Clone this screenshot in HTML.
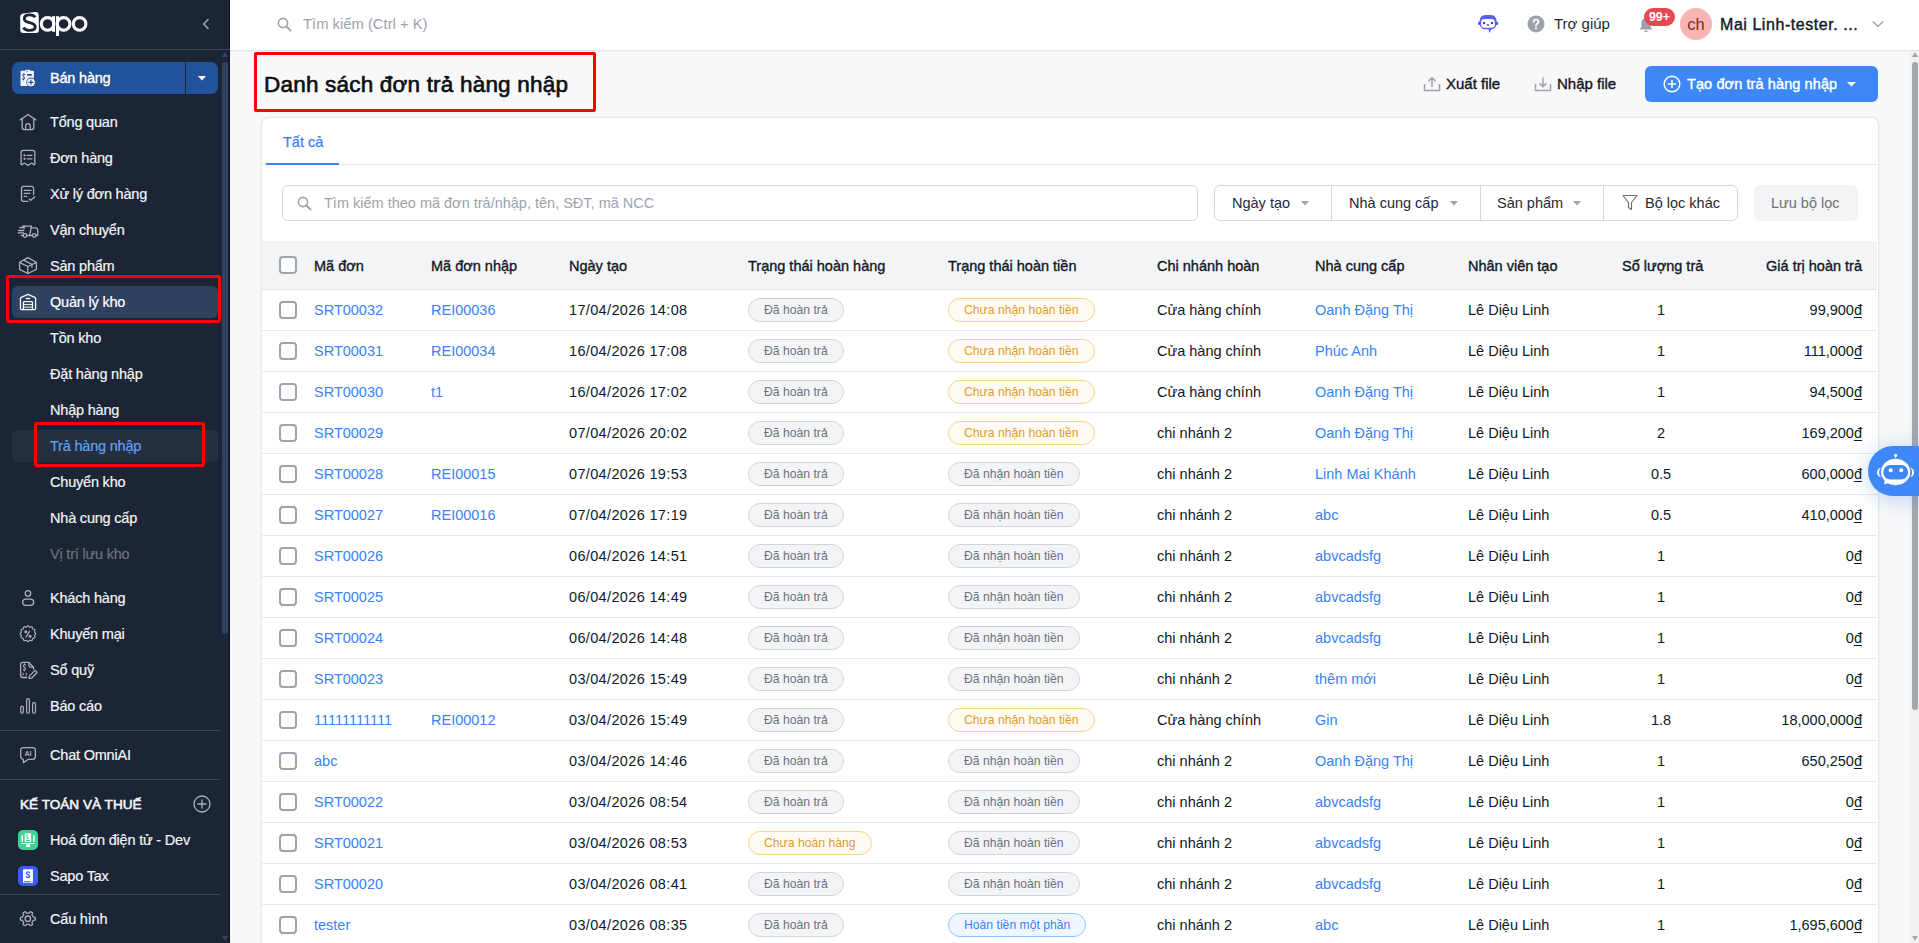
<!DOCTYPE html>
<html lang="vi">
<head>
<meta charset="utf-8">
<title>Danh sách đơn trả hàng nhập</title>
<style>
*{box-sizing:border-box;margin:0;padding:0}
html,body{width:1919px;height:943px;overflow:hidden}
body{font-family:"Liberation Sans",sans-serif;background:#f8f8f8;color:#111827;position:relative}
.abs{position:absolute}
/* sidebar */
#sb{position:absolute;left:0;top:0;width:230px;height:943px;background:#1c2535;border-right:1px solid #0e1520}
#sb .div{position:absolute;left:0;height:1px;background:#3c4657}
.mi{position:absolute;left:50px;font-size:14.5px;letter-spacing:-0.2px;color:#f1f3f6;-webkit-text-stroke:0.2px currentColor;white-space:nowrap;line-height:18px}
.ic{position:absolute;left:20px;width:17px;height:17px}
.ic svg{width:17px;height:17px;display:block}
/* topbar */
#tb{position:absolute;left:230px;top:0;right:0;height:51px;background:#fff;border-bottom:1px solid #e3e5e8;box-shadow:0 1px 2px rgba(0,0,0,.04)}
.t{position:absolute;white-space:nowrap}
/* card */
#card{position:absolute;left:261px;top:117px;width:1618px;height:900px;background:#fff;border:1px solid #e6e7ea;border-radius:8px;box-shadow:0 0 2px rgba(0,0,0,.08)}
.hd{position:absolute;top:241px;left:262px;width:1615px;height:49px;background:#f3f4f6;border-bottom:1px solid #e5e7eb}
.row{position:absolute;left:262px;width:1615px;height:41px;border-bottom:1px solid #e8e9ec;background:#fff}
.cb{position:absolute;left:279px;width:18px;height:18px;border:2px solid #9ca3af;border-radius:4px;background:#fff}
.th{position:absolute;top:258px;font-size:14.5px;-webkit-text-stroke:0.35px #111827;color:#111827;white-space:nowrap;line-height:16px}
.td{position:absolute;font-size:14.5px;color:#111827;white-space:nowrap;line-height:16px}
.lk{color:#3b82f6}
.dt{letter-spacing:.35px}
.pill{position:absolute;height:24px;border-radius:12px;border:1px solid #d1d5db;background:#f3f4f6;color:#6b7280;font-size:12.2px;line-height:22px;padding:0 15px;white-space:nowrap}
.pill.o{border-color:#fbd38d;background:#fffbf2;color:#e09b2d}
.pill.b{border-color:#93c5fd;background:#eff6ff;color:#3b82f6}
.md{-webkit-text-stroke:0.35px currentColor}
.dd{text-decoration:underline;text-decoration-thickness:1px;text-underline-offset:1.5px}
.red{position:absolute;border:3px solid #ff0000;border-radius:2px}
</style>
</head>
<body>

<!-- ================= SIDEBAR ================= -->
<div id="sb">
  <!-- logo -->
  <svg class="abs" style="left:0;top:0" width="100" height="44" viewBox="0 0 100 44">
    <path d="M23.5 13.6 L35.2 12.1 Q38.6 11.8 38.7 15 L38.9 30 Q38.9 32.9 36 32.9 L23.3 33 Q20.3 33 20.3 30 L20.2 17 Q20.2 14 23.5 13.6Z" fill="#fff"/>
    <path d="M35.2 17.2 C34.2 15.6 32 14.9 29.6 14.9 C26.3 14.9 24.3 16.6 24.3 18.9 C24.3 23.6 35.2 21.6 35.2 26.7 C35.2 29.1 32.8 30.4 29.7 30.4 C26.9 30.4 24.7 29.4 23.3 27.6" fill="none" stroke="#1c2535" stroke-width="2.9"/>
    <circle cx="47.6" cy="23.9" r="6.3" fill="none" stroke="#fff" stroke-width="3.1"/>
    <path d="M53.6 16.2 V31.8" stroke="#fff" stroke-width="3"/>
    <circle cx="63.6" cy="23.9" r="6.3" fill="none" stroke="#fff" stroke-width="3.1"/>
    <path d="M57.5 16.2 V36" stroke="#fff" stroke-width="3"/>
    <circle cx="79.6" cy="23.9" r="6.3" fill="none" stroke="#fff" stroke-width="3.1"/>
  </svg>
  <svg class="abs" style="left:202px;top:18px" width="8" height="12" viewBox="0 0 8 12"><path d="M6.5 1 L1.8 6 L6.5 11" fill="none" stroke="#9aa3b2" stroke-width="1.6"/></svg>
  <div class="div" style="top:49px;width:230px"></div>

  <!-- scrollbar -->
  <svg class="abs" style="left:222px;top:52px" width="6" height="5"><path d="M3 0 L6 5 L0 5Z" fill="#34456a"/></svg>
  <div class="abs" style="left:222px;top:62px;width:6px;height:572px;border-radius:3px;background:#2f4163"></div>

  <!-- Ban hang button -->
  <div class="abs" style="left:12px;top:62px;width:206px;height:32px;border-radius:7px;background:#21539a"></div>
  <div class="abs" style="left:185px;top:62px;width:1px;height:32px;background:#1c2535"></div>
  <svg class="abs" style="left:198px;top:76px" width="8" height="5"><path d="M0 0 L8 0 L4 4.5Z" fill="#fff"/></svg>
  <svg class="abs" style="left:16px;top:66px" width="24" height="24" viewBox="0 0 24 24"><path d="M5.6 4.8 H9 Q9.4 3.8 10.4 3.8 H13 Q14 3.8 14.4 4.8 H17 Q17.9 4.8 17.9 5.8 V19.1 Q17.9 20.1 16.9 20.1 H5.5 Q4.5 20.1 4.5 19.1 V5.9 Q4.5 4.8 5.6 4.8Z" fill="#f3f4f6"/><ellipse cx="11.1" cy="5.4" rx="1" ry=".4" fill="#21539a"/><rect x="10.9" y="8.1" width="5" height="1.6" rx=".6" fill="#21539a"/><path d="M8.8 8.6 Q8.1 8.1 7.4 8.5 Q6.6 9 7.1 10 L8.2 11.3 Q8.8 12.3 8 12.9 Q7.2 13.4 6.4 12.8 M7.8 7.6 V8.3 M7.6 13.1 V13.9" fill="none" stroke="#21539a" stroke-width="1.1" stroke-linecap="round"/><circle cx="15" cy="16.3" r="4.7" fill="#21539a"/><circle cx="15" cy="16.3" r="3.9" fill="#f3f4f6"/><path d="M12.9 16.3 H17.1 M15 14.2 V18.4" stroke="#21539a" stroke-width="1.2" stroke-linecap="round"/></svg>
  <div class="mi" style="top:69px;color:#fff;-webkit-text-stroke:0.35px #fff">Bán hàng</div>

  <!-- menu -->
  <svg class="abs" style="left:16px;top:110px" width="24" height="24" viewBox="0 0 24 24" fill="none" stroke="#a9b0bb" stroke-width="1.3" stroke-linecap="round" stroke-linejoin="round"><path d="M4.2 9.9 L12 4.45 L19.85 9.9"/><path d="M6.2 9 V17.5 Q6.2 19.6 8.3 19.6 H15.7 Q17.8 19.6 17.8 17.5 V9"/><path d="M9.6 19.6 V15.9 Q9.6 13.7 11.9 13.7 Q14.2 13.7 14.2 15.9 V19.6"/></svg>
  <div class="mi" style="top:113px">Tổng quan</div>

  <svg class="abs" style="left:16px;top:146px" width="24" height="24" viewBox="0 0 24 24" fill="none" stroke="#a9b0bb" stroke-width="1.3" stroke-linecap="round" stroke-linejoin="round"><path d="M5.1 18.4 V6.5 Q5.1 4.3 7.3 4.3 H16.6 Q18.8 4.3 18.8 6.5 V18.4 Q17.9 19.2 16.7 17.6 Q15.9 16.6 14.9 17.5 L12 19.4 L9.1 17.5 Q8.1 16.6 7.3 17.6 Q6.1 19.2 5.1 18.4Z"/><path d="M11.2 9.4 H15.9 M11.2 12.85 H15.9"/><circle cx="8.5" cy="9.4" r=".5" fill="#a9b0bb"/><circle cx="8.5" cy="12.85" r=".5" fill="#a9b0bb"/></svg>
  <div class="mi" style="top:149px">Đơn hàng</div>

  <svg class="abs" style="left:16px;top:182px" width="24" height="24" viewBox="0 0 24 24" fill="none" stroke="#a9b0bb" stroke-width="1.3" stroke-linecap="round" stroke-linejoin="round"><path d="M12 19.3 H7.5 Q5.5 19.3 5.5 17.3 V6.5 Q5.5 4.45 7.5 4.45 H15.6 Q17.6 4.45 17.6 6.5 V12.7"/><path d="M8.1 8.3 H15 M8.1 11.3 H13.8 M8.1 14.4 H10.7"/><path d="M13.2 16.9 L14.75 18.3 L18.7 15"/></svg>
  <div class="mi" style="top:185px">Xử lý đơn hàng</div>

  <svg class="abs" style="left:14px;top:216px" width="28" height="28" viewBox="0 0 28 28" fill="none" stroke="#a9b0bb" stroke-width="1.3" stroke-linecap="round" stroke-linejoin="round"><path d="M8.3 10.2 H17.5 L15.6 19.5"/><path d="M10.1 10.2 V12.5"/><path d="M17.3 11.9 H21.3 Q23.75 11.9 23.75 14.6 V19.5 H22.1"/><path d="M7.4 19.5 H9.1 M12.9 19.5 H18.3"/><circle cx="11" cy="19.45" r="1.8"/><circle cx="20.2" cy="19.45" r="1.8"/><path d="M5.8 11.7 H9.5 M4.6 14.5 H9.8 M4.1 16.9 H9.6"/></svg>
  <div class="mi" style="top:221px">Vận chuyển</div>

  <svg class="abs" style="left:16px;top:254px" width="24" height="24" viewBox="0 0 24 24" fill="none" stroke="#a9b0bb" stroke-width="1.3" stroke-linecap="round" stroke-linejoin="round"><path d="M11.8 3.6 L20.4 8.3 V15.4 L11.8 19.5 L3.6 15.4 V8.3 Z"/><path d="M3.9 8.6 L11.8 12.5 L20.1 8.6 M11.8 12.5 V19.3"/><path d="M7.6 6.2 L15.9 10.4 V13.3"/></svg>
  <div class="mi" style="top:257px">Sản phẩm</div>

  <!-- Quan ly kho active -->
  <div class="abs" style="left:12px;top:286px;width:206px;height:32px;border-radius:6px;background:#2f4161"></div>
  <svg class="abs" style="left:16px;top:290px" width="24" height="24" viewBox="0 0 24 24" fill="none" stroke="#f4f6f9" stroke-width="1.3" stroke-linecap="round" stroke-linejoin="round"><path d="M4.45 8.5 Q4.45 7.7 5.2 7.3 L11.96 4.3 L18.8 7.3 Q19.6 7.7 19.6 8.5 V18.6 Q19.6 19.6 18.6 19.6 H5.45 Q4.45 19.6 4.45 18.6 Z"/><path d="M10.3 8.5 H13.6"/><path d="M7.4 19.6 V12.7 Q7.4 11.7 8.4 11.7 H15.5 Q16.5 11.7 16.5 12.7 V19.6"/><path d="M7.4 14.6 H16.5 M7.4 17.2 H16.5" stroke-width="1"/></svg>
  <div class="mi" style="top:293px;color:#fff">Quản lý kho</div>

  <div class="mi" style="top:329px">Tồn kho</div>
  <div class="mi" style="top:365px">Đặt hàng nhập</div>
  <div class="mi" style="top:401px">Nhập hàng</div>
  <div class="abs" style="left:12px;top:430px;width:206px;height:32px;border-radius:6px;background:#262f40"></div>
  <div class="mi" style="top:437px;color:#5ea0f7">Trả hàng nhập</div>
  <div class="mi" style="top:473px">Chuyển kho</div>
  <div class="mi" style="top:509px">Nhà cung cấp</div>
  <div class="mi" style="top:545px;color:#6b7280">Vị trí lưu kho</div>

  <svg class="abs" style="left:16px;top:586px" width="24" height="24" viewBox="0 0 24 24" fill="none" stroke="#a9b0bb" stroke-width="1.3" stroke-linecap="round" stroke-linejoin="round"><circle cx="11.96" cy="7.4" r="2.75"/><rect x="6.65" y="13.15" width="11" height="6.3" rx="3.1"/></svg>
  <div class="mi" style="top:589px">Khách hàng</div>

  <svg class="abs" style="left:16px;top:622px" width="24" height="24" viewBox="0 0 24 24" fill="none" stroke="#a9b0bb" stroke-width="1.3" stroke-linecap="round" stroke-linejoin="round"><path d="M11.96 3.80 L12.47 3.98 L12.92 4.41 L13.32 4.87 L13.72 5.13 L14.20 5.11 L14.77 4.91 L15.38 4.76 L15.91 4.86 L16.26 5.27 L16.43 5.87 L16.55 6.47 L16.77 6.89 L17.19 7.11 L17.79 7.23 L18.39 7.40 L18.80 7.75 L18.90 8.28 L18.75 8.89 L18.55 9.46 L18.53 9.94 L18.79 10.34 L19.25 10.74 L19.68 11.19 L19.86 11.70 L19.68 12.21 L19.25 12.66 L18.79 13.06 L18.53 13.46 L18.55 13.94 L18.75 14.51 L18.90 15.12 L18.80 15.65 L18.39 16.00 L17.79 16.17 L17.19 16.29 L16.77 16.51 L16.55 16.93 L16.43 17.53 L16.26 18.13 L15.91 18.54 L15.38 18.64 L14.77 18.49 L14.20 18.29 L13.72 18.27 L13.32 18.53 L12.92 18.99 L12.47 19.42 L11.96 19.60 L11.45 19.42 L11.00 18.99 L10.60 18.53 L10.20 18.27 L9.72 18.29 L9.15 18.49 L8.54 18.64 L8.01 18.54 L7.66 18.13 L7.49 17.53 L7.37 16.93 L7.15 16.51 L6.73 16.29 L6.13 16.17 L5.53 16.00 L5.12 15.65 L5.02 15.12 L5.17 14.51 L5.37 13.94 L5.39 13.46 L5.13 13.06 L4.67 12.66 L4.24 12.21 L4.06 11.70 L4.24 11.19 L4.67 10.74 L5.13 10.34 L5.39 9.94 L5.37 9.46 L5.17 8.89 L5.02 8.28 L5.12 7.75 L5.53 7.40 L6.13 7.23 L6.73 7.11 L7.15 6.89 L7.37 6.47 L7.49 5.87 L7.66 5.27 L8.01 4.86 L8.54 4.76 L9.15 4.91 L9.72 5.11 L10.20 5.13 L10.60 4.87 L11.00 4.41 L11.45 3.98Z" stroke-width="1.2"/><path d="M13.5 9.4 L10.1 15"/><circle cx="9.8" cy="9.7" r=".9" fill="#a9b0bb"/><circle cx="14.1" cy="14.25" r=".9" fill="#a9b0bb"/></svg>
  <div class="mi" style="top:625px">Khuyến mại</div>

  <svg class="abs" style="left:16px;top:658px" width="24" height="24" viewBox="0 0 24 24" fill="none" stroke="#a9b0bb" stroke-width="1.3" stroke-linecap="round" stroke-linejoin="round"><path d="M10.7 19.5 H6.6 Q4.6 19.5 4.6 17.5 V6.45 Q4.6 4.45 6.6 4.45 H12.7 L17.55 9.3 V11.2"/><path d="M12.9 5 V7.6 Q12.9 9.1 14.4 9.1 H17"/><path d="M9.6 7 Q8.7 6.4 7.9 6.9 Q7 7.5 7.6 8.5 L9.2 10 Q9.9 11 9 11.6 Q8.1 12.1 7.2 11.4 M8.4 5.9 V6.6 M8.4 11.9 V12.7" stroke-width="1.1"/><path d="M7.1 15.2 V17.1 M10.4 15.2 V17.1" stroke-width="1.4" opacity=".75"/><path d="M13 20.3 L13.3 18.1 L18.5 12.9 Q19.2 12.2 19.9 12.9 L20.6 13.6 Q21.3 14.3 20.6 15 L15.4 20.2 Z"/></svg>
  <div class="mi" style="top:661px">Sổ quỹ</div>

  <svg class="abs" style="left:16px;top:694px" width="24" height="24" viewBox="0 0 24 24" fill="none" stroke="#a9b0bb" stroke-width="1.2" stroke-linecap="round" stroke-linejoin="round"><rect x="4.8" y="12.05" width="2.5" height="7.2" rx="1.2"/><rect x="10.65" y="4.7" width="2.75" height="14.55" rx="1.2"/><rect x="16.6" y="8.7" width="2.9" height="10.55" rx="1.2"/></svg>
  <div class="mi" style="top:697px">Báo cáo</div>

  <div class="div" style="top:730px;width:220px"></div>

  <svg class="abs" style="left:16px;top:743px" width="24" height="24" viewBox="0 0 24 24" fill="none" stroke="#a9b0bb" stroke-width="1.3" stroke-linecap="round" stroke-linejoin="round"><path d="M7.3 16.3 Q4.7 16 4.7 13.2 V7.5 Q4.7 4.7 7.5 4.7 H16.5 Q19.4 4.7 19.4 7.5 V13.2 Q19.4 16.3 16.5 16.3 H12.4 L7.4 19.6 Z"/><text x="12" y="13.1" text-anchor="middle" font-family="Liberation Sans" font-weight="bold" font-size="7.2" fill="#a9b0bb" stroke="none">AI</text></svg>
  <div class="mi" style="top:746px">Chat OmniAI</div>

  <div class="div" style="top:779px;width:220px"></div>

  <div class="mi" style="left:20px;top:796px;font-size:13.6px;letter-spacing:0;color:#f1f3f6;-webkit-text-stroke:0.6px #f1f3f6">KẾ TOÁN VÀ THUẾ</div>
  <svg class="abs" style="left:193px;top:795px" width="18" height="18" viewBox="0 0 18 18"><circle cx="9" cy="9" r="8" fill="none" stroke="#aab1bd" stroke-width="1.3"/><path d="M9 4.5v9M4.5 9h9" stroke="#aab1bd" stroke-width="1.3"/></svg>

  <div class="abs" style="left:18px;top:830px;width:20px;height:20px;border-radius:5px;background:#41d18f"></div>
  <svg class="abs" style="left:16px;top:828px" width="24" height="24" viewBox="0 0 24 24"><rect x="5.5" y="7.3" width="1.5" height="6.6" fill="#fff"/><rect x="17.1" y="7.3" width="1.5" height="6.6" fill="#fff"/><rect x="8.7" y="5.3" width="6.4" height="8.7" fill="#fff"/><path d="M12 7 Q11 6.5 10.5 7.2 Q10.1 7.9 10.9 8.6 L11.8 9.4 Q12.3 10.1 11.7 10.6 Q11.1 11 10.4 10.5" fill="none" stroke="#41d18f" stroke-width="1"/><rect x="10.2" y="12" width="3.6" height="1" fill="#41d18f"/><rect x="5.3" y="15" width="13.4" height="1.1" fill="#fff" opacity=".85"/><path d="M10.5 16.2 H13.6 L14.3 18.9 H9.8Z" fill="#fff"/></svg>
  <div class="mi" style="top:831px">Hoá đơn điện tử - Dev</div>

  <div class="abs" style="left:18px;top:866px;width:20px;height:20px;border-radius:5px;background:#3c5cf6"></div>
  <svg class="abs" style="left:16px;top:864px" width="24" height="24" viewBox="0 0 24 24"><path d="M8 5.2 H16.9 V17.6 H8 Q7 17.6 7 18.6 V6.2 Q7 5.2 8 5.2Z" fill="#fff"/><rect x="7" y="17.6" width="9.9" height="1.3" fill="#fff"/><path d="M8 17.8 H14.4" stroke="#3c5cf6" stroke-width=".9"/><path d="M13.6 8.6 Q13.1 7.9 12.1 7.9 Q10.6 7.9 10.6 9.2 Q10.6 10.2 12 10.6 Q13.6 11 13.6 12.2 Q13.6 13.5 12 13.5 Q10.9 13.5 10.4 12.7" fill="none" stroke="#3c5cf6" stroke-width="1.3" stroke-linecap="round"/></svg>
  <div class="mi" style="top:867px">Sapo Tax</div>

  <div class="div" style="top:894px;width:220px"></div>

  <svg class="abs" style="left:16px;top:907px" width="24" height="24" viewBox="0 0 24 24" fill="none" stroke="#a9b0bb" stroke-width="1.3" stroke-linecap="round" stroke-linejoin="round"><path d="M11.83 6.10 L11.98 6.10 L12.12 6.11 L12.27 6.12 L12.42 6.13 L12.56 6.15 L12.71 6.17 L12.85 6.19 L12.99 6.22 L13.14 6.25 L13.38 5.92 L13.66 5.51 L13.97 5.11 L14.30 4.72 L14.52 4.70 L14.70 4.77 L14.88 4.85 L15.06 4.93 L15.23 5.02 L15.41 5.11 L15.58 5.20 L15.75 5.31 L15.91 5.41 L16.08 5.52 L16.24 5.63 L16.40 5.75 L16.55 5.87 L16.64 6.07 L16.47 6.55 L16.27 7.02 L16.06 7.47 L15.89 7.85 L15.99 7.95 L16.09 8.06 L16.18 8.18 L16.27 8.29 L16.36 8.41 L16.45 8.53 L16.53 8.65 L16.60 8.77 L16.68 8.90 L16.75 9.03 L16.82 9.16 L16.88 9.29 L16.95 9.42 L17.00 9.56 L17.06 9.69 L17.11 9.83 L17.16 9.97 L17.20 10.11 L17.61 10.15 L18.11 10.19 L18.61 10.26 L19.11 10.35 L19.24 10.53 L19.27 10.72 L19.29 10.92 L19.31 11.11 L19.32 11.31 L19.33 11.50 L19.33 11.70 L19.33 11.90 L19.32 12.09 L19.31 12.29 L19.29 12.48 L19.27 12.68 L19.24 12.87 L19.11 13.05 L18.61 13.14 L18.11 13.21 L17.61 13.25 L17.20 13.29 L17.16 13.43 L17.11 13.57 L17.06 13.71 L17.00 13.84 L16.95 13.98 L16.88 14.11 L16.82 14.24 L16.75 14.37 L16.68 14.50 L16.60 14.63 L16.53 14.75 L16.45 14.87 L16.36 14.99 L16.27 15.11 L16.18 15.22 L16.09 15.34 L15.99 15.45 L15.89 15.55 L16.06 15.93 L16.27 16.38 L16.47 16.85 L16.64 17.33 L16.55 17.53 L16.40 17.65 L16.24 17.77 L16.08 17.88 L15.91 17.99 L15.75 18.09 L15.58 18.20 L15.41 18.29 L15.23 18.38 L15.06 18.47 L14.88 18.55 L14.70 18.63 L14.52 18.70 L14.30 18.68 L13.97 18.29 L13.66 17.89 L13.38 17.48 L13.14 17.15 L12.99 17.18 L12.85 17.21 L12.71 17.23 L12.56 17.25 L12.42 17.27 L12.27 17.28 L12.12 17.29 L11.98 17.30 L11.83 17.30 L11.68 17.30 L11.54 17.29 L11.39 17.28 L11.24 17.27 L11.10 17.25 L10.95 17.23 L10.81 17.21 L10.67 17.18 L10.52 17.15 L10.28 17.48 L10.00 17.89 L9.69 18.29 L9.36 18.68 L9.14 18.70 L8.96 18.63 L8.78 18.55 L8.60 18.47 L8.43 18.38 L8.25 18.29 L8.08 18.20 L7.91 18.09 L7.75 17.99 L7.58 17.88 L7.42 17.77 L7.26 17.65 L7.11 17.53 L7.02 17.33 L7.19 16.85 L7.39 16.38 L7.60 15.93 L7.77 15.55 L7.67 15.45 L7.57 15.34 L7.48 15.22 L7.39 15.11 L7.30 14.99 L7.21 14.87 L7.13 14.75 L7.06 14.63 L6.98 14.50 L6.91 14.37 L6.84 14.24 L6.78 14.11 L6.71 13.98 L6.66 13.84 L6.60 13.71 L6.55 13.57 L6.50 13.43 L6.46 13.29 L6.05 13.25 L5.55 13.21 L5.05 13.14 L4.55 13.05 L4.42 12.87 L4.39 12.68 L4.37 12.48 L4.35 12.29 L4.34 12.09 L4.33 11.90 L4.33 11.70 L4.33 11.50 L4.34 11.31 L4.35 11.11 L4.37 10.92 L4.39 10.72 L4.42 10.53 L4.55 10.35 L5.05 10.26 L5.55 10.19 L6.05 10.15 L6.46 10.11 L6.50 9.97 L6.55 9.83 L6.60 9.69 L6.66 9.56 L6.71 9.42 L6.78 9.29 L6.84 9.16 L6.91 9.03 L6.98 8.90 L7.06 8.77 L7.13 8.65 L7.21 8.53 L7.30 8.41 L7.39 8.29 L7.48 8.18 L7.57 8.06 L7.67 7.95 L7.77 7.85 L7.60 7.47 L7.39 7.02 L7.19 6.55 L7.02 6.07 L7.11 5.87 L7.26 5.75 L7.42 5.63 L7.58 5.52 L7.75 5.41 L7.91 5.31 L8.08 5.20 L8.25 5.11 L8.43 5.02 L8.60 4.93 L8.78 4.85 L8.96 4.77 L9.14 4.70 L9.36 4.72 L9.69 5.11 L10.00 5.51 L10.28 5.92 L10.52 6.25 L10.67 6.22 L10.81 6.19 L10.95 6.17 L11.10 6.15 L11.24 6.13 L11.39 6.12 L11.54 6.11 L11.68 6.10Z" stroke-width="1.25"/><circle cx="11.83" cy="11.7" r="2.7"/></svg>
  <div class="mi" style="top:910px">Cấu hình</div>

  <svg class="abs" style="left:222px;top:936px" width="6" height="5"><path d="M0 0 L6 0 L3 5Z" fill="#34456a"/></svg>

  <!-- red highlight boxes -->
  <div class="red" style="left:6px;top:275px;width:215px;height:48px"></div>
  <div class="red" style="left:34px;top:422px;width:171px;height:45px"></div>
</div>

<!-- ================= TOPBAR ================= -->
<div id="tb"></div>
<svg class="abs" style="left:277px;top:17px" width="15" height="15" viewBox="0 0 15 15"><circle cx="6" cy="6" r="4.6" fill="none" stroke="#9ca3af" stroke-width="1.6"/><path d="M9.5 9.5 L13.5 13.5" stroke="#9ca3af" stroke-width="1.8" stroke-linecap="round"/></svg>
<div class="t" style="left:303px;top:16.2px;font-size:14.8px;color:#9ca3af">Tìm kiếm (Ctrl + K)</div>

<svg class="abs" style="left:1472px;top:8px" width="32" height="32" viewBox="0 0 32 32"><rect x="7.8" y="7" width="16.6" height="14.3" rx="5.2" fill="#5b60f5"/><rect x="6" y="13.4" width="20.2" height="3.6" rx="1.3" fill="#5b60f5"/><path d="M16.3 20.5 L20 20.3 L17.3 25Z" fill="#5b60f5"/><rect x="9.1" y="10.9" width="13.7" height="8.9" rx="3.2" fill="#fff"/><circle cx="12" cy="15.1" r="1.1" fill="#1c1a66"/><circle cx="20" cy="15.1" r="1.1" fill="#1c1a66"/><path d="M14.4 16.4 H17.6 Q16 19 14.4 16.4Z" fill="#1c1a66"/></svg>
<svg class="abs" style="left:1527px;top:15px" width="18" height="18" viewBox="0 0 18 18"><circle cx="9" cy="9" r="8.5" fill="#9ca3af"/><path d="M6.6 7 Q6.6 4.5 9 4.5 Q11.4 4.5 11.4 6.8 Q11.4 8.2 9.8 9 Q9 9.5 9 10.6" fill="none" stroke="#fff" stroke-width="1.7" stroke-linecap="round"/><circle cx="9" cy="13.3" r="1.1" fill="#fff"/></svg>
<div class="t" style="left:1554px;top:15.2px;font-size:15px;color:#1f2937">Trợ giúp</div>

<svg class="abs" style="left:1638px;top:17px" width="16" height="16" viewBox="0 0 16 16"><path d="M8 1 C4.8 1 3.3 3.5 3.3 6.5 V10 L1.5 12.5 H14.5 L12.7 10 V6.5 C12.7 3.5 11.2 1 8 1Z" fill="#9ca3af"/><rect x="6.3" y="13.5" width="3.4" height="1.6" rx=".8" fill="#9ca3af"/></svg>
<div class="abs" style="left:1644px;top:8px;width:31px;height:18px;border-radius:9px;background:#e5484d;color:#fff;font-size:12.5px;font-weight:bold;line-height:18px;text-align:center">99+</div>
<div class="abs" style="left:1680px;top:8px;width:32px;height:32px;border-radius:16px;background:#f8b4b4;color:#7a2a33;font-size:16.5px;line-height:33px;text-align:center">ch</div>
<div class="t" style="left:1720px;top:16px;font-size:16px;color:#111827;-webkit-text-stroke:0.4px #111827;letter-spacing:0.55px">Mai Linh-tester. ...</div>
<svg class="abs" style="left:1872px;top:20px" width="12" height="8" viewBox="0 0 12 8"><path d="M1 1.5 L6 6.5 L11 1.5" fill="none" stroke="#9ca3af" stroke-width="1.4"/></svg>

<!-- page scrollbar -->
<div class="abs" style="left:1910px;top:51px;width:9px;height:892px;background:#f0f0f0"></div>
<svg class="abs" style="left:1912px;top:52px" width="6" height="5"><path d="M3 0 L6 5 L0 5Z" fill="#a3a7ae"/></svg>
<div class="abs" style="left:1912px;top:62px;width:6px;height:648px;border-radius:3px;background:#a3a7ae"></div>
<svg class="abs" style="left:1912px;top:936px" width="6" height="5"><path d="M0 0 L6 0 L3 5Z" fill="#a3a7ae"/></svg>

<!-- ================= PAGE HEADER ================= -->
<div class="t" style="left:264px;top:71.7px;font-size:22.5px;letter-spacing:0.2px;color:#0b0f17;-webkit-text-stroke:0.65px #0b0f17">Danh sách đơn trả hàng nhập</div>
<div class="red" style="left:254px;top:52px;width:342px;height:60px"></div>

<svg class="abs" style="left:1423px;top:76px" width="18" height="16" viewBox="0 0 18 16"><path d="M1.5 8 V14.5 H16.5 V8" fill="none" stroke="#9ca3af" stroke-width="1.5" stroke-linejoin="round"/><path d="M9 11 V2 M5.5 5.2 L9 1.8 L12.5 5.2" fill="none" stroke="#9ca3af" stroke-width="1.5"/></svg>
<div class="t" style="left:1446px;top:75px;font-size:15px;color:#111827;-webkit-text-stroke:0.4px #111827">Xuất file</div>
<svg class="abs" style="left:1534px;top:76px" width="18" height="16" viewBox="0 0 18 16"><path d="M1.5 8 V14.5 H16.5 V8" fill="none" stroke="#9ca3af" stroke-width="1.5" stroke-linejoin="round"/><path d="M9 1.5 V10.5 M5.5 7.2 L9 10.6 L12.5 7.2" fill="none" stroke="#9ca3af" stroke-width="1.5"/></svg>
<div class="t" style="left:1557px;top:75px;font-size:15px;color:#111827;-webkit-text-stroke:0.4px #111827">Nhập file</div>

<div class="abs" style="left:1645px;top:66px;width:233px;height:36px;border-radius:6px;background:#3d87f6"></div>
<svg class="abs" style="left:1663px;top:75px" width="18" height="18" viewBox="0 0 18 18"><circle cx="9" cy="9" r="7.8" fill="none" stroke="#fff" stroke-width="1.5"/><path d="M9 4.8v8.4M4.8 9h8.4" stroke="#fff" stroke-width="1.5"/></svg>
<div class="t" style="left:1687px;top:75.8px;font-size:14.5px;letter-spacing:0.1px;color:#fff;-webkit-text-stroke:0.4px #fff">Tạo đơn trả hàng nhập</div>
<svg class="abs" style="left:1847px;top:82px" width="9" height="5"><path d="M0 0 L9 0 L4.5 4.5Z" fill="#fff"/></svg>

<!-- ================= CARD ================= -->
<div id="card"></div>
<div class="t" style="left:283px;top:133.5px;font-size:14.5px;color:#3b82f6;-webkit-text-stroke:0.25px #3b82f6">Tất cả</div>
<div class="abs" style="left:262px;top:164px;width:1615px;height:1px;background:#e5e7eb"></div>
<div class="abs" style="left:266px;top:163px;width:73px;height:2px;background:#3b82f6"></div>

<!-- search -->
<div class="abs" style="left:282px;top:185px;width:916px;height:36px;border:1px solid #d4d7dc;border-radius:6px;background:#fff"></div>
<svg class="abs" style="left:297px;top:196px" width="15" height="15" viewBox="0 0 15 15"><circle cx="6" cy="6" r="4.6" fill="none" stroke="#9ca3af" stroke-width="1.6"/><path d="M9.5 9.5 L13.5 13.5" stroke="#9ca3af" stroke-width="1.8" stroke-linecap="round"/></svg>
<div class="t" style="left:324px;top:195px;font-size:14.5px;color:#9ca3af">Tìm kiếm theo mã đơn trả/nhập, tên, SĐT, mã NCC</div>

<!-- filter group -->
<div class="abs" style="left:1214px;top:185px;width:524px;height:36px;border:1px solid #d4d7dc;border-radius:6px;background:#fff"></div>
<div class="abs" style="left:1331px;top:185px;width:1px;height:36px;background:#d4d7dc"></div>
<div class="abs" style="left:1480px;top:185px;width:1px;height:36px;background:#d4d7dc"></div>
<div class="abs" style="left:1603px;top:185px;width:1px;height:36px;background:#d4d7dc"></div>
<div class="t" style="left:1232px;top:195px;font-size:14.5px;color:#1f2937">Ngày tạo</div>
<svg class="abs" style="left:1301px;top:201px" width="8" height="5"><path d="M0 0 L8 0 L4 4.5Z" fill="#9ca3af"/></svg>
<div class="t" style="left:1349px;top:195px;font-size:14.5px;color:#1f2937">Nhà cung cấp</div>
<svg class="abs" style="left:1450px;top:201px" width="8" height="5"><path d="M0 0 L8 0 L4 4.5Z" fill="#9ca3af"/></svg>
<div class="t" style="left:1497px;top:195px;font-size:14.5px;color:#1f2937">Sản phẩm</div>
<svg class="abs" style="left:1573px;top:201px" width="8" height="5"><path d="M0 0 L8 0 L4 4.5Z" fill="#9ca3af"/></svg>
<svg class="abs" style="left:1622px;top:194px" width="16" height="17" viewBox="0 0 16 17"><path d="M1 1.5 H15 L9.5 8.5 V15.5 L6.5 13.5 V8.5 Z" fill="none" stroke="#6b7280" stroke-width="1.2" stroke-linejoin="round"/></svg>
<div class="t" style="left:1645px;top:195px;font-size:14.5px;color:#1f2937">Bộ lọc khác</div>

<div class="abs" style="left:1754px;top:185px;width:104px;height:36px;border-radius:6px;background:#f3f4f6"></div>
<div class="t" style="left:1771px;top:195px;font-size:14.5px;color:#6b7280">Lưu bộ lọc</div>

<!-- table header -->
<div class="hd"></div>
<div class="cb" style="top:256px"></div>
<div class="th" style="left:314px">Mã đơn</div>
<div class="th" style="left:431px">Mã đơn nhập</div>
<div class="th" style="left:569px">Ngày tạo</div>
<div class="th" style="left:748px">Trạng thái hoàn hàng</div>
<div class="th" style="left:948px">Trạng thái hoàn tiền</div>
<div class="th" style="left:1157px">Chi nhánh hoàn</div>
<div class="th" style="left:1315px">Nhà cung cấp</div>
<div class="th" style="left:1468px">Nhân viên tạo</div>
<div class="th" style="left:1622px">Số lượng trả</div>
<div class="th" style="left:1662px;width:200px;text-align:right">Giá trị hoàn trả</div>

<!--ROWS-->
<div class="row" style="top:290px"></div>
<div class="cb" style="top:301px"></div>
<div class="td lk" style="left:314px;top:302px">SRT00032</div>
<div class="td lk" style="left:431px;top:302px">REI00036</div>
<div class="td dt" style="left:569px;top:302px">17/04/2026 14:08</div>
<div class="pill" style="left:748px;top:298px">Đã hoàn trả</div>
<div class="pill o" style="left:948px;top:298px">Chưa nhận hoàn tiền</div>
<div class="td" style="left:1157px;top:302px">Cửa hàng chính</div>
<div class="td lk" style="left:1315px;top:302px">Oanh Đặng Thị</div>
<div class="td" style="left:1468px;top:302px">Lê Diệu Linh</div>
<div class="td" style="left:1611px;width:100px;text-align:center;top:302px">1</div>
<div class="td" style="left:1662px;width:200px;text-align:right;top:302px">99,900<span class="dd">đ</span></div>
<div class="row" style="top:331px"></div>
<div class="cb" style="top:342px"></div>
<div class="td lk" style="left:314px;top:343px">SRT00031</div>
<div class="td lk" style="left:431px;top:343px">REI00034</div>
<div class="td dt" style="left:569px;top:343px">16/04/2026 17:08</div>
<div class="pill" style="left:748px;top:339px">Đã hoàn trả</div>
<div class="pill o" style="left:948px;top:339px">Chưa nhận hoàn tiền</div>
<div class="td" style="left:1157px;top:343px">Cửa hàng chính</div>
<div class="td lk" style="left:1315px;top:343px">Phúc Anh</div>
<div class="td" style="left:1468px;top:343px">Lê Diệu Linh</div>
<div class="td" style="left:1611px;width:100px;text-align:center;top:343px">1</div>
<div class="td" style="left:1662px;width:200px;text-align:right;top:343px">111,000<span class="dd">đ</span></div>
<div class="row" style="top:372px"></div>
<div class="cb" style="top:383px"></div>
<div class="td lk" style="left:314px;top:384px">SRT00030</div>
<div class="td lk" style="left:431px;top:384px">t1</div>
<div class="td dt" style="left:569px;top:384px">16/04/2026 17:02</div>
<div class="pill" style="left:748px;top:380px">Đã hoàn trả</div>
<div class="pill o" style="left:948px;top:380px">Chưa nhận hoàn tiền</div>
<div class="td" style="left:1157px;top:384px">Cửa hàng chính</div>
<div class="td lk" style="left:1315px;top:384px">Oanh Đặng Thị</div>
<div class="td" style="left:1468px;top:384px">Lê Diệu Linh</div>
<div class="td" style="left:1611px;width:100px;text-align:center;top:384px">1</div>
<div class="td" style="left:1662px;width:200px;text-align:right;top:384px">94,500<span class="dd">đ</span></div>
<div class="row" style="top:413px"></div>
<div class="cb" style="top:424px"></div>
<div class="td lk" style="left:314px;top:425px">SRT00029</div>
<div class="td dt" style="left:569px;top:425px">07/04/2026 20:02</div>
<div class="pill" style="left:748px;top:421px">Đã hoàn trả</div>
<div class="pill o" style="left:948px;top:421px">Chưa nhận hoàn tiền</div>
<div class="td" style="left:1157px;top:425px">chi nhánh 2</div>
<div class="td lk" style="left:1315px;top:425px">Oanh Đặng Thị</div>
<div class="td" style="left:1468px;top:425px">Lê Diệu Linh</div>
<div class="td" style="left:1611px;width:100px;text-align:center;top:425px">2</div>
<div class="td" style="left:1662px;width:200px;text-align:right;top:425px">169,200<span class="dd">đ</span></div>
<div class="row" style="top:454px"></div>
<div class="cb" style="top:465px"></div>
<div class="td lk" style="left:314px;top:466px">SRT00028</div>
<div class="td lk" style="left:431px;top:466px">REI00015</div>
<div class="td dt" style="left:569px;top:466px">07/04/2026 19:53</div>
<div class="pill" style="left:748px;top:462px">Đã hoàn trả</div>
<div class="pill" style="left:948px;top:462px">Đã nhận hoàn tiền</div>
<div class="td" style="left:1157px;top:466px">chi nhánh 2</div>
<div class="td lk" style="left:1315px;top:466px">Linh Mai Khánh</div>
<div class="td" style="left:1468px;top:466px">Lê Diệu Linh</div>
<div class="td" style="left:1611px;width:100px;text-align:center;top:466px">0.5</div>
<div class="td" style="left:1662px;width:200px;text-align:right;top:466px">600,000<span class="dd">đ</span></div>
<div class="row" style="top:495px"></div>
<div class="cb" style="top:506px"></div>
<div class="td lk" style="left:314px;top:507px">SRT00027</div>
<div class="td lk" style="left:431px;top:507px">REI00016</div>
<div class="td dt" style="left:569px;top:507px">07/04/2026 17:19</div>
<div class="pill" style="left:748px;top:503px">Đã hoàn trả</div>
<div class="pill" style="left:948px;top:503px">Đã nhận hoàn tiền</div>
<div class="td" style="left:1157px;top:507px">chi nhánh 2</div>
<div class="td lk" style="left:1315px;top:507px">abc</div>
<div class="td" style="left:1468px;top:507px">Lê Diệu Linh</div>
<div class="td" style="left:1611px;width:100px;text-align:center;top:507px">0.5</div>
<div class="td" style="left:1662px;width:200px;text-align:right;top:507px">410,000<span class="dd">đ</span></div>
<div class="row" style="top:536px"></div>
<div class="cb" style="top:547px"></div>
<div class="td lk" style="left:314px;top:548px">SRT00026</div>
<div class="td dt" style="left:569px;top:548px">06/04/2026 14:51</div>
<div class="pill" style="left:748px;top:544px">Đã hoàn trả</div>
<div class="pill" style="left:948px;top:544px">Đã nhận hoàn tiền</div>
<div class="td" style="left:1157px;top:548px">chi nhánh 2</div>
<div class="td lk" style="left:1315px;top:548px">abvcadsfg</div>
<div class="td" style="left:1468px;top:548px">Lê Diệu Linh</div>
<div class="td" style="left:1611px;width:100px;text-align:center;top:548px">1</div>
<div class="td" style="left:1662px;width:200px;text-align:right;top:548px">0<span class="dd">đ</span></div>
<div class="row" style="top:577px"></div>
<div class="cb" style="top:588px"></div>
<div class="td lk" style="left:314px;top:589px">SRT00025</div>
<div class="td dt" style="left:569px;top:589px">06/04/2026 14:49</div>
<div class="pill" style="left:748px;top:585px">Đã hoàn trả</div>
<div class="pill" style="left:948px;top:585px">Đã nhận hoàn tiền</div>
<div class="td" style="left:1157px;top:589px">chi nhánh 2</div>
<div class="td lk" style="left:1315px;top:589px">abvcadsfg</div>
<div class="td" style="left:1468px;top:589px">Lê Diệu Linh</div>
<div class="td" style="left:1611px;width:100px;text-align:center;top:589px">1</div>
<div class="td" style="left:1662px;width:200px;text-align:right;top:589px">0<span class="dd">đ</span></div>
<div class="row" style="top:618px"></div>
<div class="cb" style="top:629px"></div>
<div class="td lk" style="left:314px;top:630px">SRT00024</div>
<div class="td dt" style="left:569px;top:630px">06/04/2026 14:48</div>
<div class="pill" style="left:748px;top:626px">Đã hoàn trả</div>
<div class="pill" style="left:948px;top:626px">Đã nhận hoàn tiền</div>
<div class="td" style="left:1157px;top:630px">chi nhánh 2</div>
<div class="td lk" style="left:1315px;top:630px">abvcadsfg</div>
<div class="td" style="left:1468px;top:630px">Lê Diệu Linh</div>
<div class="td" style="left:1611px;width:100px;text-align:center;top:630px">1</div>
<div class="td" style="left:1662px;width:200px;text-align:right;top:630px">0<span class="dd">đ</span></div>
<div class="row" style="top:659px"></div>
<div class="cb" style="top:670px"></div>
<div class="td lk" style="left:314px;top:671px">SRT00023</div>
<div class="td dt" style="left:569px;top:671px">03/04/2026 15:49</div>
<div class="pill" style="left:748px;top:667px">Đã hoàn trả</div>
<div class="pill" style="left:948px;top:667px">Đã nhận hoàn tiền</div>
<div class="td" style="left:1157px;top:671px">chi nhánh 2</div>
<div class="td lk" style="left:1315px;top:671px">thêm mới</div>
<div class="td" style="left:1468px;top:671px">Lê Diệu Linh</div>
<div class="td" style="left:1611px;width:100px;text-align:center;top:671px">1</div>
<div class="td" style="left:1662px;width:200px;text-align:right;top:671px">0<span class="dd">đ</span></div>
<div class="row" style="top:700px"></div>
<div class="cb" style="top:711px"></div>
<div class="td lk" style="left:314px;top:712px">11111111111</div>
<div class="td lk" style="left:431px;top:712px">REI00012</div>
<div class="td dt" style="left:569px;top:712px">03/04/2026 15:49</div>
<div class="pill" style="left:748px;top:708px">Đã hoàn trả</div>
<div class="pill o" style="left:948px;top:708px">Chưa nhận hoàn tiền</div>
<div class="td" style="left:1157px;top:712px">Cửa hàng chính</div>
<div class="td lk" style="left:1315px;top:712px">Gin</div>
<div class="td" style="left:1468px;top:712px">Lê Diệu Linh</div>
<div class="td" style="left:1611px;width:100px;text-align:center;top:712px">1.8</div>
<div class="td" style="left:1662px;width:200px;text-align:right;top:712px">18,000,000<span class="dd">đ</span></div>
<div class="row" style="top:741px"></div>
<div class="cb" style="top:752px"></div>
<div class="td lk" style="left:314px;top:753px">abc</div>
<div class="td dt" style="left:569px;top:753px">03/04/2026 14:46</div>
<div class="pill" style="left:748px;top:749px">Đã hoàn trả</div>
<div class="pill" style="left:948px;top:749px">Đã nhận hoàn tiền</div>
<div class="td" style="left:1157px;top:753px">chi nhánh 2</div>
<div class="td lk" style="left:1315px;top:753px">Oanh Đặng Thị</div>
<div class="td" style="left:1468px;top:753px">Lê Diệu Linh</div>
<div class="td" style="left:1611px;width:100px;text-align:center;top:753px">1</div>
<div class="td" style="left:1662px;width:200px;text-align:right;top:753px">650,250<span class="dd">đ</span></div>
<div class="row" style="top:782px"></div>
<div class="cb" style="top:793px"></div>
<div class="td lk" style="left:314px;top:794px">SRT00022</div>
<div class="td dt" style="left:569px;top:794px">03/04/2026 08:54</div>
<div class="pill" style="left:748px;top:790px">Đã hoàn trả</div>
<div class="pill" style="left:948px;top:790px">Đã nhận hoàn tiền</div>
<div class="td" style="left:1157px;top:794px">chi nhánh 2</div>
<div class="td lk" style="left:1315px;top:794px">abvcadsfg</div>
<div class="td" style="left:1468px;top:794px">Lê Diệu Linh</div>
<div class="td" style="left:1611px;width:100px;text-align:center;top:794px">1</div>
<div class="td" style="left:1662px;width:200px;text-align:right;top:794px">0<span class="dd">đ</span></div>
<div class="row" style="top:823px"></div>
<div class="cb" style="top:834px"></div>
<div class="td lk" style="left:314px;top:835px">SRT00021</div>
<div class="td dt" style="left:569px;top:835px">03/04/2026 08:53</div>
<div class="pill o" style="left:748px;top:831px">Chưa hoàn hàng</div>
<div class="pill" style="left:948px;top:831px">Đã nhận hoàn tiền</div>
<div class="td" style="left:1157px;top:835px">chi nhánh 2</div>
<div class="td lk" style="left:1315px;top:835px">abvcadsfg</div>
<div class="td" style="left:1468px;top:835px">Lê Diệu Linh</div>
<div class="td" style="left:1611px;width:100px;text-align:center;top:835px">1</div>
<div class="td" style="left:1662px;width:200px;text-align:right;top:835px">0<span class="dd">đ</span></div>
<div class="row" style="top:864px"></div>
<div class="cb" style="top:875px"></div>
<div class="td lk" style="left:314px;top:876px">SRT00020</div>
<div class="td dt" style="left:569px;top:876px">03/04/2026 08:41</div>
<div class="pill" style="left:748px;top:872px">Đã hoàn trả</div>
<div class="pill" style="left:948px;top:872px">Đã nhận hoàn tiền</div>
<div class="td" style="left:1157px;top:876px">chi nhánh 2</div>
<div class="td lk" style="left:1315px;top:876px">abvcadsfg</div>
<div class="td" style="left:1468px;top:876px">Lê Diệu Linh</div>
<div class="td" style="left:1611px;width:100px;text-align:center;top:876px">1</div>
<div class="td" style="left:1662px;width:200px;text-align:right;top:876px">0<span class="dd">đ</span></div>
<div class="row" style="top:905px"></div>
<div class="cb" style="top:916px"></div>
<div class="td lk" style="left:314px;top:917px">tester</div>
<div class="td dt" style="left:569px;top:917px">03/04/2026 08:35</div>
<div class="pill" style="left:748px;top:913px">Đã hoàn trả</div>
<div class="pill b" style="left:948px;top:913px">Hoàn tiền một phần</div>
<div class="td" style="left:1157px;top:917px">chi nhánh 2</div>
<div class="td lk" style="left:1315px;top:917px">abc</div>
<div class="td" style="left:1468px;top:917px">Lê Diệu Linh</div>
<div class="td" style="left:1611px;width:100px;text-align:center;top:917px">1</div>
<div class="td" style="left:1662px;width:200px;text-align:right;top:917px">1,695,600<span class="dd">đ</span></div>
<!--/ROWS-->

<!-- robot floating button -->
<div class="abs" style="left:1868px;top:446px;width:80px;height:50px;border-radius:25px;background:#3d87f6;box-shadow:0 3px 22px rgba(59,130,246,.32)"></div>
<svg class="abs" style="left:1868px;top:446px" width="51" height="50" viewBox="0 0 51 50">
  <circle cx="27.6" cy="9.3" r="1.6" fill="#fff"/><path d="M26.6 10 L27.6 12.6 L28.6 10Z" fill="#fff"/>
  <path d="M12.9 21.6 Q9 23 9 26.4 Q9 29.8 12.9 31.2 Q11.1 29 11.1 26.4 Q11.1 23.8 12.9 21.6Z" fill="#fff"/>
  <path d="M42.3 21.6 Q46.1 23 46.1 26.4 Q46.1 29.8 42.3 31.2 Q44.1 29 44.1 26.4 Q44.1 23.8 42.3 21.6Z" fill="#fff"/>
  <ellipse cx="27.6" cy="26" rx="14.7" ry="13.15" fill="#fff"/>
  <path d="M16.8 34.5 L16.2 38.6 L21.8 36.6Z" fill="#fff"/>
  <rect x="15.4" y="18.9" width="24.7" height="14.7" rx="7" fill="#3d87f6"/>
  <circle cx="22.7" cy="24.3" r="2" fill="#fff"/><circle cx="33.2" cy="24.3" r="2" fill="#fff"/>
</svg>

</body>
</html>
